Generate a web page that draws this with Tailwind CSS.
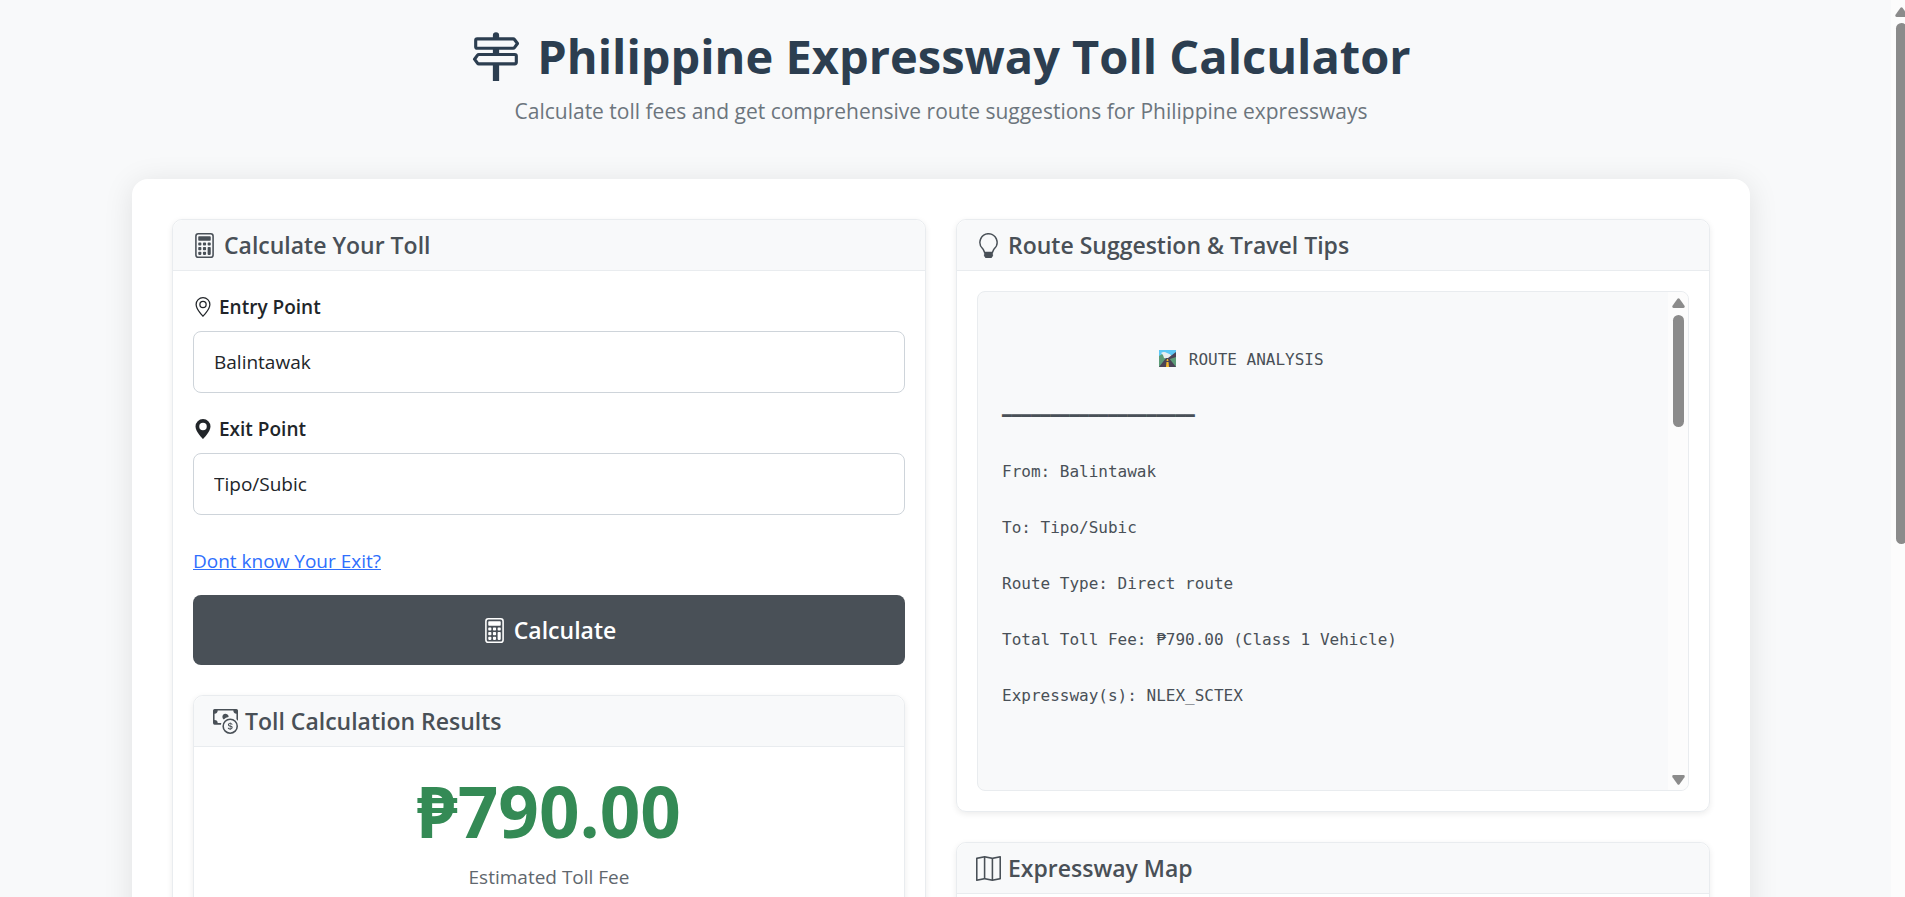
<!DOCTYPE html>
<html lang="en">
<head>
    <meta charset="UTF-8">
    <meta name="viewport" content="width=device-width, initial-scale=1.0">
    <title>Philippine Expressway Toll Calculator</title>
    <script src="https://cdn.jsdelivr.net/npm/@tailwindcss/browser@4"></script>
</head>
<body class="bg-[#f8f9fa] text-[#212529] font-['Open_Sans','Noto_Sans',sans-serif]">
    <!-- Icons -->
    <svg class="hidden" xmlns="http://www.w3.org/2000/svg">
        <symbol id="calculator" viewBox="0 0 16 16">
            <path d="M12 1a1 1 0 0 1 1 1v12a1 1 0 0 1-1 1H4a1 1 0 0 1-1-1V2a1 1 0 0 1 1-1zM4 0a2 2 0 0 0-2 2v12a2 2 0 0 0 2 2h8a2 2 0 0 0 2-2V2a2 2 0 0 0-2-2z"/>
            <path d="M4 2.500a.5.5 0 0 1 .5-.5h7a.5.5 0 0 1 .5.5v2a.5.5 0 0 1-.5.5h-7a.5.5 0 0 1-.5-.5zm0 4a.5.5 0 0 1 .5-.5h1a.5.5 0 0 1 .5.5v1a.5.5 0 0 1-.5.5h-1a.5.5 0 0 1-.5-.5zm0 3a.5.5 0 0 1 .5-.5h1a.5.5 0 0 1 .5.5v1a.5.5 0 0 1-.5.5h-1a.5.5 0 0 1-.5-.5zm0 3a.5.5 0 0 1 .5-.5h1a.5.5 0 0 1 .5.5v1a.5.5 0 0 1-.5.5h-1a.5.5 0 0 1-.5-.5zm3-6a.5.5 0 0 1 .5-.5h1a.5.5 0 0 1 .5.5v1a.5.5 0 0 1-.5.5h-1a.5.5 0 0 1-.5-.5zm0 3a.5.5 0 0 1 .5-.5h1a.5.5 0 0 1 .5.5v1a.5.5 0 0 1-.5.5h-1a.5.5 0 0 1-.5-.5zm0 3a.5.5 0 0 1 .5-.5h1a.5.5 0 0 1 .5.5v1a.5.5 0 0 1-.5.5h-1a.5.5 0 0 1-.5-.5zm3-6a.5.5 0 0 1 .5-.5h1a.5.5 0 0 1 .5.5v1a.5.5 0 0 1-.5.5h-1a.5.5 0 0 1-.5-.5zm0 3a.5.5 0 0 1 .5-.5h1a.5.5 0 0 1 .5.5v4a.5.5 0 0 1-.5.5h-1a.5.5 0 0 1-.5-.5z"/>
        </symbol>
    </svg>

    <div class="flex h-screen overflow-hidden">
        <main class="flex-1 pl-33 pr-[141px]">
            <!-- Header -->
            <header class="pt-6 pb-[50px] text-center">
                <h1 class="flex items-center justify-center gap-4 text-[47px] leading-16 font-bold text-[#2c3e50]">
                    <svg class="size-[50px] shrink-0" viewBox="0 0 16 16" fill="currentColor"><path d="M7 1.414V2H2a1 1 0 0 0-1 1v2a1 1 0 0 0 1 1h5v1H2.500a1 1 0 0 0-.8.4L.725 8.700a.5.5 0 0 0 0 .6l.975 1.300a1 1 0 0 0 .8.4H7v5h2v-5h5a1 1 0 0 0 1-1V8a1 1 0 0 0-1-1H9V6h4.500a1 1 0 0 0 .8-.4l.975-1.300a.5.5 0 0 0 0-.6L14.300 2.400a1 1 0 0 0-.8-.4H9v-.586a1 1 0 0 0-2 0M13.500 3l.75 1-.75 1H2V3zm.5 5v2H2.500l-.75-1 .75-1z"/></svg>
                    Philippine Expressway Toll Calculator
                </h1>
                <p class="mt-[5px] text-[21px] leading-9 text-[#6c757d]">Calculate toll fees and get comprehensive route suggestions for Philippine expressways</p>
            </header>

            <div class="grid grid-cols-2 items-start gap-[30px] rounded-2xl bg-white p-10 shadow-[0_4px_30px_rgba(0,0,0,0.1)] min-h-screen">
                <!-- Calculator -->
                <section class="rounded-[10px] border border-[#e9ecef] shadow-[0_2px_6px_rgba(0,0,0,0.08)]">
                    <h2 class="flex h-[51px] items-center gap-[7px] rounded-t-[10px] border-b border-[#e9ecef] bg-[#f8f9fa] px-[19px] text-[23px] font-semibold text-[#495057]">
                        <svg class="size-[25px]" fill="currentColor"><use href="#calculator"/></svg>
                        Calculate Your Toll
                    </h2>
                    <form class="px-5 pt-[22px]" onsubmit="return false">
                        <label for="entry" class="flex h-7 items-center gap-[6px] text-[19px] font-semibold">
                            <svg class="size-5" viewBox="0 0 16 16" fill="currentColor"><path d="M12.166 8.940c-.524 1.062-1.234 2.120-1.960 3.070A32 32 0 0 1 8 14.580a32 32 0 0 1-2.206-2.570c-.726-.95-1.436-2.008-1.960-3.070C3.304 7.867 3 6.862 3 6a5 5 0 0 1 10 0c0 .862-.305 1.867-.834 2.940M8 16s6-5.686 6-10A6 6 0 0 0 2 6c0 4.314 6 10 6 10"/><path d="M8 8a2 2 0 1 1 0-4 2 2 0 0 1 0 4m0 1a3 3 0 1 0 0-6 3 3 0 0 0 0 6"/></svg>
                            Entry Point
                        </label>
                        <input id="entry" type="text" value="Balintawak" class="mt-[10px] block h-[62px] w-full rounded-lg border border-[#ced4da] bg-white px-5 text-[19px]">

                        <label for="exit" class="mt-[22px] flex h-7 items-center gap-[6px] text-[19px] font-semibold">
                            <svg class="size-5" viewBox="0 0 16 16" fill="currentColor"><path d="M8 16s6-5.686 6-10A6 6 0 0 0 2 6c0 4.314 6 10 6 10m0-7a3 3 0 1 1 0-6 3 3 0 0 1 0 6"/></svg>
                            Exit Point
                        </label>
                        <input id="exit" type="text" value="Tipo/Subic" class="mt-[10px] block h-[62px] w-full rounded-lg border border-[#ced4da] bg-white px-5 text-[19px]">

                        <a href="#" class="mt-8 inline-block text-[19px] leading-7 text-[#2f6ffd] underline">Dont know Your Exit?</a>

                        <button type="submit" class="mt-5 flex h-[70px] w-full items-center justify-center gap-[7px] rounded-lg bg-[#495057] text-[23px] font-semibold text-white">
                            <svg class="size-[25px]" fill="currentColor"><use href="#calculator"/></svg>
                            Calculate
                        </button>
                    </form>

                    <!-- Results -->
                    <div class="mx-5 mt-[30px] mb-5 rounded-[10px] border border-[#e9ecef] shadow-[0_2px_6px_rgba(0,0,0,0.08)]">
                        <h3 class="flex h-[51px] items-center gap-[7px] rounded-t-[10px] border-b border-[#e9ecef] bg-[#f8f9fa] px-[19px] text-[23px] font-semibold text-[#495057]">
                            <svg class="size-[25px]" viewBox="0 0 16 16" fill="currentColor"><path fill-rule="evenodd" d="M11 15a4 4 0 1 0 0-8 4 4 0 0 0 0 8m5-4a5 5 0 1 1-10 0 5 5 0 0 1 10 0"/><path d="M9.438 11.944c.047.596.518 1.060 1.363 1.116v.44h.375v-.443c.875-.061 1.386-.529 1.386-1.207 0-.618-.39-.936-1.090-1.100l-.296-.07v-1.200c.376.043.614.248.671.532h.658c-.047-.575-.54-1.024-1.329-1.073V8.500h-.375v.45c-.747.073-1.255.522-1.255 1.158 0 .562.378.92 1.007 1.066l.248.061v1.272c-.384-.058-.639-.27-.696-.563h-.668zm1.360-1.354c-.369-.085-.569-.26-.569-.522 0-.294.216-.514.572-.578v1.100zm.432.746c.449.104.655.272.655.569 0 .339-.257.571-.709.614v-1.195z"/><path d="M1 0a1 1 0 0 0-1 1v8a1 1 0 0 0 1 1h4.083q.088-.517.258-1H3a2 2 0 0 0-2-2V3a2 2 0 0 0 2-2h10a2 2 0 0 0 2 2v3.528c.38.34.717.728 1 1.154V1a1 1 0 0 0-1-1z"/><path d="M9.998 5.083 10 5a2 2 0 1 0-3.132 1.650 6 6 0 0 1 3.130-1.567"/></svg>
                            Toll Calculation Results
                        </h3>
                        <div class="py-5 text-center">
                            <p class="text-[71px] leading-[88px] font-bold text-[#348a55]">₱790.00</p>
                            <p class="mt-2 text-[19px] leading-7 text-[#5f676e]">Estimated Toll Fee</p>
                        </div>
                    </div>
                </section>

                <div class="flex flex-col gap-[30px]">
                    <!-- Route suggestion -->
                    <section class="rounded-[10px] border border-[#e9ecef] shadow-[0_2px_6px_rgba(0,0,0,0.08)]">
                        <h2 class="flex h-[51px] items-center gap-[7px] rounded-t-[10px] border-b border-[#e9ecef] bg-[#f8f9fa] px-[19px] text-[23px] font-semibold text-[#495057]">
                            <svg class="size-[25px]" viewBox="0 0 16 16" fill="currentColor"><path d="M2 6a6 6 0 1 1 10.174 4.310c-.203.196-.359.4-.453.619l-.762 1.769A.5.5 0 0 1 10.500 13a.5.5 0 0 1 0 1 .5.5 0 0 1 0 1l-.224.447a1 1 0 0 1-.894.553H6.618a1 1 0 0 1-.894-.553L5.500 15a.5.5 0 0 1 0-1 .5.5 0 0 1 0-1 .5.5 0 0 1-.46-.302l-.761-1.770a2 2 0 0 0-.453-.618A5.980 5.980 0 0 1 2 6m6-5a5 5 0 0 0-3.479 8.592c.263.254.514.564.676.941L5.830 12h4.342l.632-1.467c.162-.377.413-.687.676-.941A5 5 0 0 0 8 1"/></svg>
                            Route Suggestion &amp; Travel Tips
                        </h2>
                        <div class="m-5 flex h-[500px] overflow-hidden rounded-lg border border-[#e9ecef] bg-[#f8f9fa]">
<pre class="flex-1 px-6 py-[26px] font-['DejaVu_Sans_Mono',monospace] text-[16px] leading-7 text-[#495057]">
&nbsp;
                <svg class="mx-[3px] inline-block size-[17px] align-[-2px]" viewBox="0 0 17 17"><path fill="#5ec8f5" d="M0 0h17v8H0z"/><path fill="#5d9c78" d="M0 6l5-3 6 4 6-3v13H0z"/><path fill="#e8eef0" d="M2 3q3-2 6 0 4 1 5 4l-4 2-4-1-1-3z"/><path fill="#4b4356" d="M17 2v5l-6 2-2-1zM7 8h3l7 9H0z"/><path fill="#f5b92e" d="M8 9h1l.5 2h-2zM7.500 12h2l.5 5H7z"/></svg> ROUTE ANALYSIS

━━━━━━━━━━━━━━━━━━━━

From: Balintawak

To: Tipo/Subic

Route Type: Direct route

Total Toll Fee: ₱790.00 (Class 1 Vehicle)

Expressway(s): NLEX_SCTEX
</pre>
                            <div class="flex w-5 flex-col items-center bg-[#fcfcfc] pt-[6px] pb-[5px]">
                                <svg class="h-[10px] w-[13px]" viewBox="0 0 13 10" fill="#8b8b8b"><path d="M5.500.8q1-1 2 0l5 7q.8 2-1 2.200h-10q-1.800-.2-1-2.200z"/></svg>
                                <div class="mt-[7px] h-28 w-[11px] rounded-full bg-[#8b8b8b]"></div>
                                <svg class="mt-auto h-[10px] w-[13px] rotate-180" viewBox="0 0 13 10" fill="#8b8b8b"><path d="M5.500.8q1-1 2 0l5 7q.8 2-1 2.200h-10q-1.800-.2-1-2.200z"/></svg>
                            </div>
                        </div>
                    </section>

                    <!-- Map -->
                    <section class="rounded-[10px] border border-[#e9ecef] shadow-[0_2px_6px_rgba(0,0,0,0.08)]">
                        <h2 class="flex h-[51px] items-center gap-[7px] rounded-t-[10px] border-b border-[#e9ecef] bg-[#f8f9fa] px-[19px] text-[23px] font-semibold text-[#495057]">
                            <svg class="size-[25px]" viewBox="0 0 16 16" fill="currentColor"><path fill-rule="evenodd" d="M15.817.113A.5.5 0 0 1 16 .5v14a.5.5 0 0 1-.402.49l-5 1a.5.5 0 0 1-.196 0L5.500 15.010l-4.902.98A.5.5 0 0 1 0 15.500v-14a.5.5 0 0 1 .402-.49l5-1a.5.5 0 0 1 .196 0L10.500.99l4.902-.98a.5.5 0 0 1 .415.103M10 1.910l-4-.8v12.980l4 .8zm1 12.980 4-.8V1.110l-4 .8zm-6-.8V1.110l-4 .8v12.980z"/></svg>
                            Expressway Map
                        </h2>
                        <div class="h-[400px]"></div>
                    </section>
                </div>
            </div>
        </main>

        <!-- Scrollbar -->
        <div class="w-[14px] shrink-0 overflow-hidden bg-[#fcfcfc]">
            <div class="flex w-5 flex-col items-center pt-[7px]">
                <svg class="h-[10px] w-[13px]" viewBox="0 0 13 10" fill="#8b8b8b"><path d="M5.500.8q1-1 2 0l5 7q.8 2-1 2.200h-10q-1.800-.2-1-2.200z"/></svg>
                <div class="mt-[6px] h-[521px] w-[11px] rounded-full bg-[#8b8b8b]"></div>
            </div>
        </div>
    </div>
</body>
</html>
